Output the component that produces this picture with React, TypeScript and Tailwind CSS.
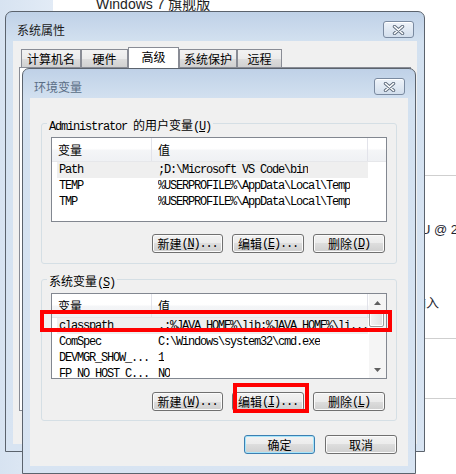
import React from "react";

const CJK = /([\u3000-\u9fff\uff00-\uffef]+)/;
const MONO = "font-['Liberation_Mono','Noto_Sans_CJK_SC',monospace] text-[12px] tracking-[-1.2px]";
const HAN = "font-['Noto_Sans_CJK_SC',sans-serif] text-[12px]";
const BTN_BG = "bg-[linear-gradient(to_bottom,#f2f2f2,#ebebeb_50%,#dddddd_50%,#cfcfcf)]";

const userVars = [
  ["Path", ";D:\\Microsoft VS Code\\bin"],
  ["TEMP", "%USERPROFILE%\\AppData\\Local\\Temp"],
  ["TMP", "%USERPROFILE%\\AppData\\Local\\Temp"],
];

const sysVars = [
  ["classpath", ".;%JAVA_HOME%\\lib;%JAVA_HOME%\\li..."],
  ["ComSpec", "C:\\Windows\\system32\\cmd.exe"],
  ["DEVMGR_SHOW_...", "1"],
  ["FP_NO_HOST_C...", "NO"],
];

// mixed chinese / ascii text, simsun style (ascii is half width)
const Txt = ({ s }: { s: string }) => (
  <>
    {s
      .split(CJK)
      .filter(Boolean)
      .map((p, i) => (
        <span key={i} className={CJK.test(p) ? HAN : MONO}>
          {p}
        </span>
      ))}
  </>
);

const CloseBtn = () => (
  <div className="mr-[3px] mt-[9px] flex h-[17px] w-[31px] items-center justify-center rounded-[3px] border border-[#7a8aa0] bg-[linear-gradient(to_bottom,#eef3f9,#d3dfed)] shadow-[inset_0_1px_0_#fff]">
    <svg width="13" height="10" viewBox="0 0 13 10">
      <path d="M2.5 1.5 L10.5 8.5 M10.5 1.5 L2.5 8.5" stroke="#5e6c7d" strokeWidth="3.4" strokeLinecap="round" />
      <path d="M2.5 1.5 L10.5 8.5 M10.5 1.5 L2.5 8.5" stroke="#ffffff" strokeWidth="1.6" strokeLinecap="round" />
    </svg>
  </div>
);

const Frame = ({
  className,
  title,
  titleCls,
  children,
}: {
  className: string;
  title: string;
  titleCls: string;
  children?: React.ReactNode;
}) => (
  <div
    className={`absolute isolate flex flex-col rounded-t-[7px] border border-[#5b636d] bg-[linear-gradient(to_bottom,#bfd1e7,#d3e1f0_30px,#d8e4f2)] px-[7px] pb-[7px] ${className}`}
  >
    <div className="flex h-[29px] shrink-0 items-start justify-between">
      <span className={`pl-[4px] pt-[10px] text-[12px] leading-[16px] ${titleCls}`}>{title}</span>
      <CloseBtn />
    </div>
    <div className="flex-1 bg-[#f0f0f0]">{children}</div>
  </div>
);

const Btn = ({ w, zh, k, tail = "", def = false }: { w: string; zh: string; k?: string; tail?: string; def?: boolean }) => (
  <div
    className={`flex h-[19px] ${w} items-center justify-center rounded-[3px] border ${
      def ? "border-[#3c7fb1] shadow-[inset_0_0_0_1px_#a6e5fb]" : "border-[#707070] shadow-[inset_0_0_0_1px_#fbfbfb]"
    } ${BTN_BG} leading-[16px]`}
  >
    <span className={HAN}>{zh}</span>
    {k && (
      <span className={MONO}>
        (<span className="underline">{k}</span>){tail}
      </span>
    )}
  </div>
);

const Scrollbar = () => (
  <div className="flex w-[17px] shrink-0 flex-col bg-[#f5f5f5]">
    <div className="flex h-[17px] items-center justify-center">
      <svg width="7" height="4" viewBox="0 0 7 4">
        <path d="M0 4 L3.5 0 L7 4Z" fill="#5f5f5f" />
      </svg>
    </div>
    <div className="mr-[2px] h-[16px] rounded-[2px] border border-[#9a9a9a] bg-[linear-gradient(to_right,#f4f4f4,#e0e0e0)] shadow-[inset_0_0_0_1px_#fff]" />
    <div className="flex-1" />
    <div className="flex h-[17px] items-center justify-center">
      <svg width="7" height="4" viewBox="0 0 7 4">
        <path d="M0 0 L3.5 4 L7 0Z" fill="#5f5f5f" />
      </svg>
    </div>
  </div>
);

const List = ({ rows, h, scroll = false }: { rows: string[][]; h: string; scroll?: boolean }) => (
  <div className={`flex ${h} overflow-hidden border border-[#828790] bg-white`}>
    <div className="flex min-w-0 flex-1 flex-col">
      <div className="flex h-[24px] shrink-0 border-b border-[#e6e7ea] bg-[linear-gradient(to_bottom,#ffffff,#ffffff_45%,#f4f5f7_55%,#eff1f4)] leading-[16px]">
        <div className="flex w-[100px] items-center border-r border-[#e2e3ea] pl-[6px]">
          <span className={HAN}>变量</span>
        </div>
        <div className="flex w-[216px] items-center border-r border-[#e2e3ea] pl-[6px]">
          <span className={HAN}>值</span>
        </div>
        <div className="flex-1" />
      </div>
      {rows.map(([n, v], i) => (
        <div key={n} className="flex h-[16px] shrink-0">
          <div className={`ml-[5px] flex w-[311px] items-center leading-[16px] ${i === 0 ? "bg-[#efefef]" : ""}`}>
            <span className={`w-[101px] shrink-0 whitespace-nowrap pl-[2px] ${MONO}`}>{n}</span>
            <span className={`overflow-hidden whitespace-nowrap ${MONO}`}>{v}</span>
          </div>
        </div>
      ))}
    </div>
    {scroll && <Scrollbar />}
  </div>
);

const Group = ({ label, cls, children }: { label: string; cls: string; children?: React.ReactNode }) => (
  <div className={`relative w-[356px] rounded-[3px] border border-[#d5dfe5] px-[9px] pt-[13px] ${cls}`}>
    <span className="absolute left-[5px] top-[-9px] whitespace-nowrap bg-[#f0f0f0] px-[2px] leading-[16px]">
      <Txt s={label.slice(0, -3)} />
      <span className={MONO}>
        (<span className="underline">{label.slice(-2, -1)}</span>)
      </span>
    </span>
    {children}
  </div>
);

const Tab = ({ label, w, active = false }: { label: string; w: string; active?: boolean }) =>
  active ? (
    <div className={`relative z-10 flex h-[21px] ${w} items-center justify-center border border-b-0 border-[#898c95] bg-white pb-[2px] leading-[16px]`}>
      <span className={HAN}>{label}</span>
    </div>
  ) : (
    <div className={`flex h-[19px] ${w} items-center justify-center border border-b-0 border-[#898c95] ${BTN_BG} leading-[16px]`}>
      <span className={HAN}>{label}</span>
    </div>
  );

const BackWindow = () => (
  <Frame className="left-[5px] top-[11px] h-[441px] w-[420px]" title="系统属性" titleCls="text-[#1b1b1b]">
    <div className="mt-[6px] flex h-[21px] items-end pl-[8px]">
      <Tab label="计算机名" w="w-[60px]" />
      <Tab label="硬件" w="w-[47px]" />
      <Tab label="高级" w="w-[51px]" active />
      <Tab label="系统保护" w="w-[58px]" />
      <Tab label="远程" w="w-[45px]" />
    </div>
    <div className="relative -mt-[1px] ml-[6px] mr-[6px] h-[344px] border border-[#898c95] bg-white" />
  </Frame>
);

const FrontWindow = () => (
  <Frame className="left-[22px] top-[68px] h-[406px] w-[394px]" title="环境变量" titleCls="text-[#5a6d85]">
    <div className="flex flex-col pl-[11px] pt-[25px]">
      <Group label="Administrator 的用户变量(U)" cls="pb-[10px]">
        <List rows={userVars} h="h-[85px]" />
        <div className="mt-[12px] flex justify-end gap-[9px] pr-[2px]">
          <Btn w="w-[71px]" zh="新建" k="N" tail="..." />
          <Btn w="w-[72px]" zh="编辑" k="E" tail="..." />
          <Btn w="w-[72px]" zh="删除" k="D" />
        </div>
      </Group>
      <Group label="系统变量(S)" cls="mt-[15px] pb-[9px]">
        <List rows={sysVars} h="h-[86px]" scroll />
        <div className="mt-[13px] flex justify-end gap-[9px] pr-[2px]">
          <Btn w="w-[71px]" zh="新建" k="W" tail="..." />
          <Btn w="w-[72px]" zh="编辑" k="I" tail="..." />
          <Btn w="w-[72px]" zh="删除" k="L" />
        </div>
      </Group>
      <div className="mt-[14px] flex w-[356px] justify-end gap-[10px]">
        <Btn w="w-[71px]" zh="确定" def />
        <Btn w="w-[72px]" zh="取消" />
      </div>
    </div>
  </Frame>
);

// bits of the page that sits behind the dialogs
const Page = () => (
  <div className="flex min-w-0 flex-1 flex-col">
    <div className="-mt-[4px] ml-[43px] whitespace-nowrap font-['Liberation_Sans','Noto_Sans_CJK_SC',sans-serif] text-[14px] leading-[16px] text-[#1e1e1e]">
      Windows 7 旗舰版
    </div>
    <div className="ml-[300px] mt-[163px] h-px bg-[#cfcfcf]" />
    <div className="ml-[350px] mt-[46px] whitespace-nowrap font-['Liberation_Sans',sans-serif] text-[13px] leading-[16px] text-[#1e2430]">
      CPU @ 2.50GHz
    </div>
    <div className="ml-[360px] mt-[56px] whitespace-nowrap font-['Noto_Sans_CJK_SC',sans-serif] text-[13px] leading-[16px] text-[#1e2430]">
      输入
    </div>
    <div className="ml-[300px] mt-[28px] h-px bg-[#cfcfcf]" />
    <div className="ml-[300px] mt-[59px] h-px bg-[#cfcfcf]" />
  </div>
);

export default function App() {
  return (
    <div className="relative flex h-[474px] w-[456px] overflow-hidden bg-white font-['Noto_Sans_CJK_SC',sans-serif] text-black">
      <div className="w-[53px] shrink-0 bg-[linear-gradient(to_right,#d7e3f1,#e2ebf6)]" />
      <Page />
      <BackWindow />
      <FrontWindow />
      <div className="absolute left-[40px] top-[310px] h-[22px] w-[352px] border-[4px] border-[#ff0000]" />
      <div className="absolute left-[233px] top-[383px] h-[30px] w-[76px] border-[4px] border-[#ff0000]" />
    </div>
  );
}
